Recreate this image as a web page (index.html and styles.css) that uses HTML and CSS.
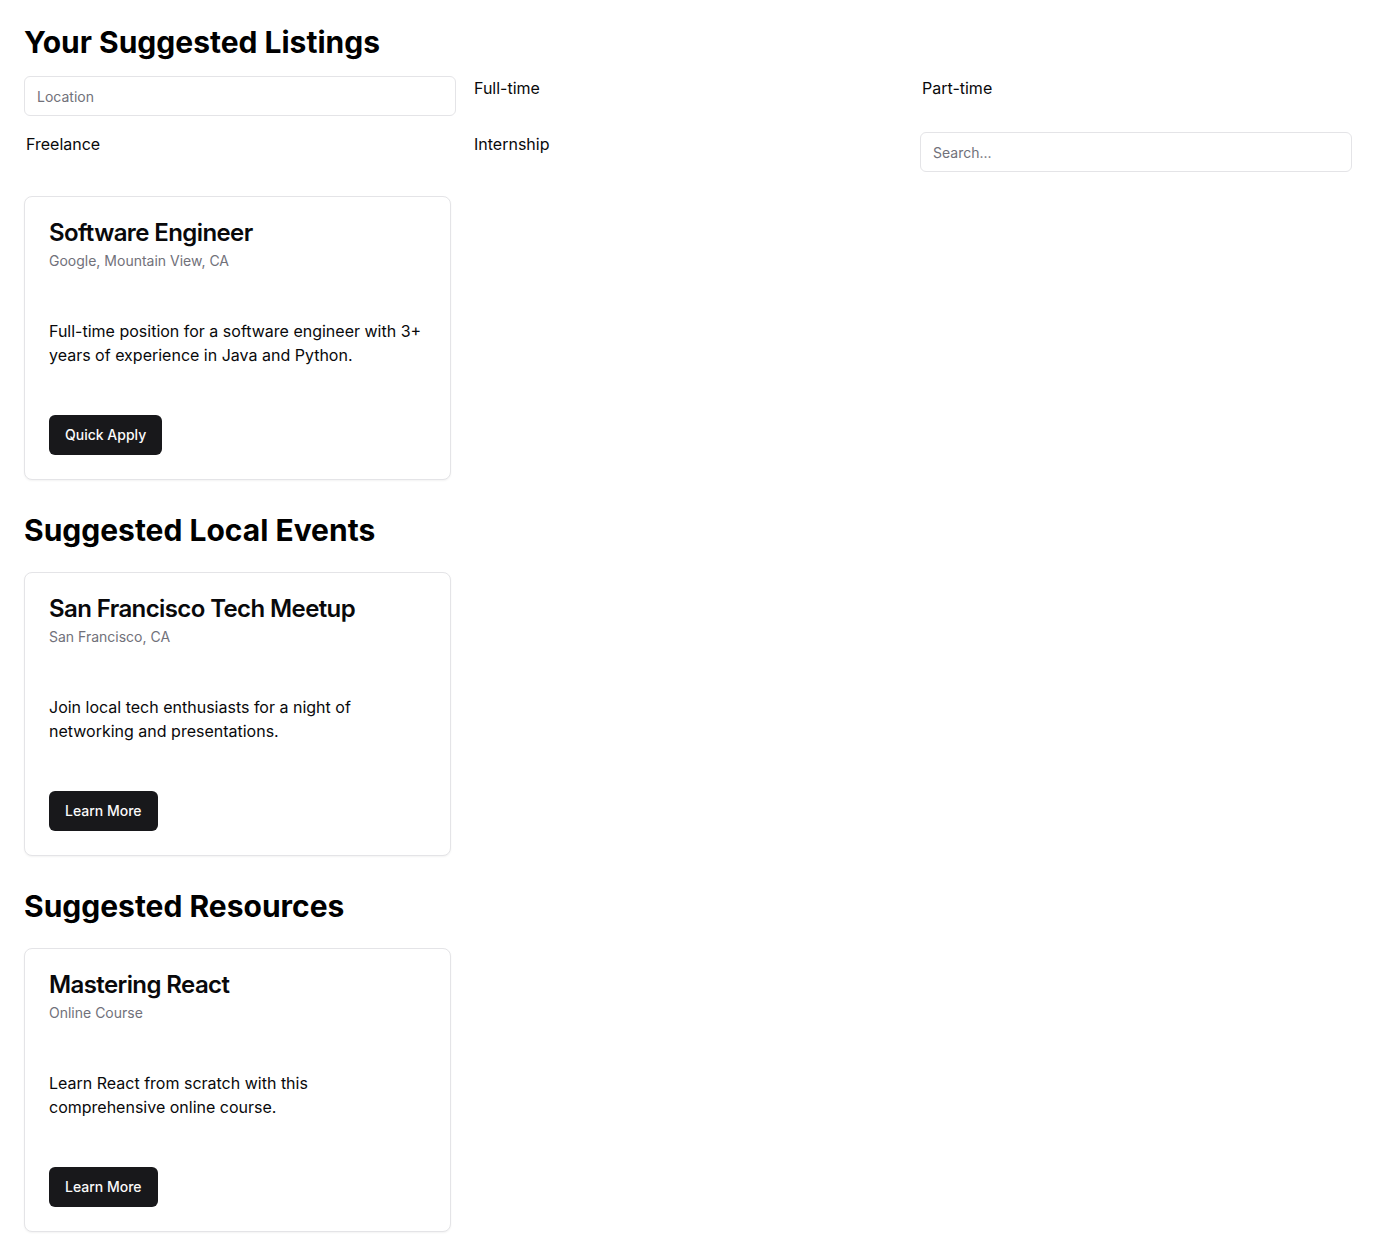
FILE: index.html
```html
<!DOCTYPE html>
<html lang="en">
<head>
<meta charset="utf-8">
<title>Suggestions</title>
<link rel="stylesheet" href="styles.css">
</head>
<body>
<main class="page">
  <h1 class="page-title">Your Suggested Listings</h1>
  <div class="filters">
    <input class="field" type="text" placeholder="Location">
    <label class="filter-label">Full-time</label>
    <label class="filter-label">Part-time</label>
    <label class="filter-label">Freelance</label>
    <label class="filter-label">Internship</label>
    <input class="field" type="text" placeholder="Search...">
  </div>

  <div class="card-grid">
    <div class="card">
      <div class="card-header">
        <h3 class="card-title">Software Engineer</h3>
        <p class="card-desc">Google, Mountain View, CA</p>
      </div>
      <div class="card-content">
        <p>Full-time position for a software engineer with 3+ years of experience in Java and Python.</p>
      </div>
      <div class="card-footer">
        <button class="btn">Quick Apply</button>
      </div>
    </div>
  </div>

  <h2 class="section-title">Suggested Local Events</h2>
  <div class="card-grid">
    <div class="card">
      <div class="card-header">
        <h3 class="card-title">San Francisco Tech Meetup</h3>
        <p class="card-desc">San Francisco, CA</p>
      </div>
      <div class="card-content">
        <p>Join local tech enthusiasts for a night of networking and presentations.</p>
      </div>
      <div class="card-footer">
        <button class="btn">Learn More</button>
      </div>
    </div>
  </div>

  <h2 class="section-title">Suggested Resources</h2>
  <div class="card-grid">
    <div class="card">
      <div class="card-header">
        <h3 class="card-title">Mastering React</h3>
        <p class="card-desc">Online Course</p>
      </div>
      <div class="card-content">
        <p>Learn React from scratch with this comprehensive online course.</p>
      </div>
      <div class="card-footer">
        <button class="btn">Learn More</button>
      </div>
    </div>
  </div>
</main>
</body>
</html>
```

FILE: styles.css
```css
* { box-sizing: border-box; }

html, body {
  margin: 0;
  padding: 0;
  background: #ffffff;
}

body {
  font-family: Inter, "Noto Sans", "Liberation Sans", sans-serif;
  color: #09090b;
  font-size: 16px;
  line-height: 24px;
}

.page {
  padding: 24px;
}

.page-title,
.section-title {
  margin: 0;
  font-size: 30px;
  line-height: 36px;
  font-weight: 700;
  color: #000;
}

.page-title {
  margin-bottom: 16px;
}

.section-title {
  margin-top: 32px;
  margin-bottom: 24px;
}

.filters {
  display: grid;
  grid-template-columns: repeat(3, 1fr);
  gap: 16px;
  margin-bottom: 24px;
}

.field {
  height: 40px;
  width: 100%;
  border: 1px solid #e4e4e7;
  border-radius: 6px;
  padding: 8px 12px;
  font-family: inherit;
  font-size: 14px;
  color: #09090b;
  background: #fff;
  outline: none;
}

.field::placeholder {
  color: #71717a;
}

.filter-label {
  display: block;
  padding-left: 2px;
  font-size: 16px;
  line-height: 24px;
  color: #09090b;
}

.card-grid {
  display: grid;
  grid-template-columns: repeat(3, 1fr);
  gap: 24px;
}

.card {
  border: 1px solid #e4e4e7;
  border-radius: 8px;
  background: #fff;
  box-shadow: 0 1px 2px rgba(0, 0, 0, 0.05);
}

.card-header {
  padding: 24px;
  display: flex;
  flex-direction: column;
  gap: 6px;
}

.card-title {
  margin: 0;
  font-size: 24px;
  line-height: 24px;
  font-weight: 600;
  letter-spacing: -0.6px;
  color: #09090b;
}

.card-desc {
  margin: 0;
  font-size: 14px;
  line-height: 20px;
  color: #71717a;
}

.card-content {
  padding: 24px;
}

.card-content p {
  margin: 0;
  font-size: 16px;
  line-height: 24px;
  color: #09090b;
}

.card-footer {
  padding: 24px;
  display: flex;
  align-items: center;
}

.btn {
  height: 40px;
  padding: 0 16px;
  border: none;
  border-radius: 6px;
  background: #18181b;
  color: #fafafa;
  font-family: inherit;
  font-size: 14px;
  font-weight: 500;
  line-height: 20px;
  cursor: pointer;
}
```
